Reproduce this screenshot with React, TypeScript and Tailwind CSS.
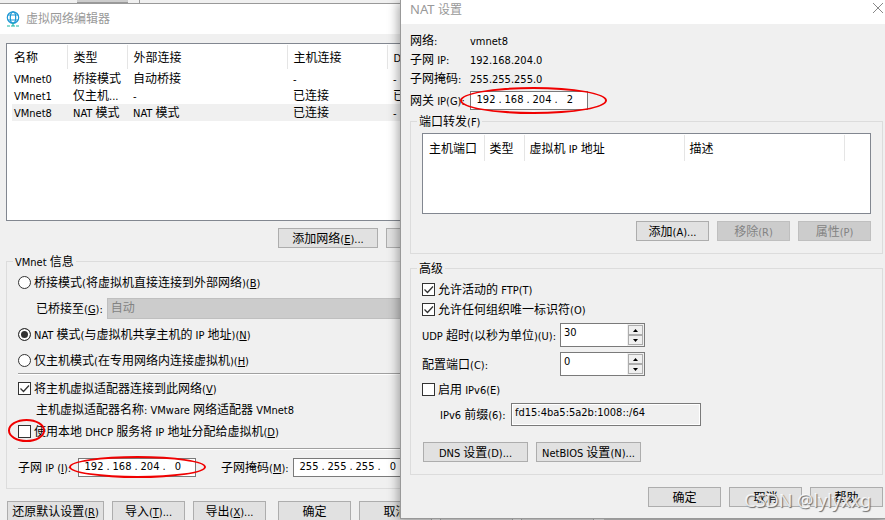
import { ReactNode } from "react";

type TextProps = {
  children: string;
};

type ButtonProps = {
  label: string;
  className?: string;
  disabled?: boolean;
};

type FieldProps = {
  label: string;
  checked?: boolean;
};

// Renders a caption: "&X" marks the mnemonic letter, latin runs are set a bit smaller than chinese ones
function Caption({ children }: TextProps) {
  const parts = children.split(/([\u4e00-\u9fff]+)/).filter(Boolean);
  return (
    <span className="inline-block pt-[2px] whitespace-pre">
      {parts.map((part, i) => {
        if (/[\u4e00-\u9fff]/.test(part)) return <span key={i}>{part}</span>;
        const [before, after] = part.split("&");
        return (
          <span key={i} className="text-[11px]">
            {before}
            {after && <u>{after[0]}</u>}
            {after && after.slice(1)}
          </span>
        );
      })}
    </span>
  );
}

function Button({ label, className = "w-[73px]", disabled }: ButtonProps) {
  return (
    <button
      disabled={disabled}
      className={`h-5 shrink-0 border border-[#adadad] bg-[#e1e1e1] leading-4 disabled:border-[#bfbfbf] disabled:bg-[#ccc] disabled:text-[#838383] ${className}`}
    >
      <Caption>{label}</Caption>
    </button>
  );
}

function Checkbox({ label, checked }: FieldProps) {
  return (
    <label className="flex items-center gap-[3px]">
      <span className="relative flex">
        <input type="checkbox" defaultChecked={checked} className="peer size-[13px] appearance-none border border-[#333] bg-white" />
        <svg viewBox="0 0 13 13" className="pointer-events-none absolute inset-0 hidden size-[13px] peer-checked:block">
          <path d="M2.5 6.5l3 3 5.5-6" fill="none" stroke="#333" strokeWidth="1.3" />
        </svg>
      </span>
      <Caption>{label}</Caption>
    </label>
  );
}

function Radio({ label, checked }: FieldProps) {
  return (
    <label className="flex h-[26px] items-center gap-[3px]">
      <input
        type="radio"
        name="vmnet-mode"
        defaultChecked={checked}
        className="size-[13px] appearance-none rounded-full border border-[#333] bg-white checked:bg-[#333] checked:shadow-[inset_0_0_0_2px_#fff]"
      />
      <Caption>{label}</Caption>
    </label>
  );
}

function IpInput({ label, value }: { label: string; value: string[] }) {
  return (
    <div role="group" aria-label={label} className="flex h-[19px] w-[118px] shrink-0 items-center border border-[#7a7a7a] bg-white pl-[3px] text-[11px]">
      {value.map((octet, i) => (
        <div key={i} className="flex items-center">
          {i > 0 && <span className="w-1 text-center">.</span>}
          <input aria-label={`${label} ${i + 1}`} defaultValue={octet} className="w-6 text-center outline-none" />
        </div>
      ))}
    </div>
  );
}

function Spinner({ id, value }: { id: string; value: string }) {
  return (
    <div className="flex h-6 w-[85px] border border-[#7a7a7a] bg-white">
      <input id={id} defaultValue={value} className="w-0 flex-1 pb-1 pl-[3px] text-[11px] outline-none" />
      <div className="flex w-[17px] flex-col bg-[#f0f0f0] p-px">
        <button aria-label="+" className="flex flex-1 items-center justify-center border border-[#adadad] bg-[#f0f0f0]">
          <svg viewBox="0 0 5 3" className="h-[3px] w-[5px]"><path d="M0 3L2.5 0 5 3z" /></svg>
        </button>
        <button aria-label="-" className="flex flex-1 items-center justify-center border border-[#adadad] bg-[#f0f0f0]">
          <svg viewBox="0 0 5 3" className="h-[3px] w-[5px]"><path d="M0 0L2.5 3 5 0z" /></svg>
        </button>
      </div>
    </div>
  );
}

function Group({ title, className, children }: { title: string; className: string; children: ReactNode }) {
  return (
    <fieldset className={`border border-[#dcdcdc] ${className}`}>
      <legend className="-ml-[5px] h-4 px-[2px] leading-[14px]"><Caption>{title}</Caption></legend>
      {children}
    </fieldset>
  );
}

function Divider() {
  return <hr className="h-[2px] border-t border-b border-t-[#a0a0a0] border-b-white" />;
}

function Mark({ className }: { className: string }) {
  return <span className={`pointer-events-none absolute rounded-[50%] border-2 border-[#f00000] ${className}`} />;
}

const networks = [
  { name: "VMnet0", type: "桥接模式", external: "自动桥接", host: "-", dhcp: "-" },
  { name: "VMnet1", type: "仅主机...", external: "-", host: "已连接", dhcp: "已启用" },
  { name: "VMnet8", type: "NAT 模式", external: "NAT 模式", host: "已连接", dhcp: "-", selected: true },
];

function NetworkTable() {
  return (
    <div className="mx-[6px] mt-[9px] h-[178px] border border-[#828790] bg-white pt-px pl-[5px]">
      <table className="w-full table-fixed text-left">
        <thead>
          <tr className="h-6 leading-4">
            <th className="w-[55px] border-r border-[#e5e5e5] pl-[2px] font-normal"><Caption>名称</Caption></th>
            <th className="w-[60px] border-r border-[#e5e5e5] pl-[6px] font-normal"><Caption>类型</Caption></th>
            <th className="w-[160px] border-r border-[#e5e5e5] pl-[6px] font-normal"><Caption>外部连接</Caption></th>
            <th className="w-[100px] border-r border-[#e5e5e5] pl-[6px] font-normal"><Caption>主机连接</Caption></th>
            <th className="pl-[6px] font-normal"><Caption>DHCP</Caption></th>
          </tr>
        </thead>
        <tbody>
          <tr className="h-px" />
          {networks.map((net) => (
            <tr key={net.name} className={`h-[17px] leading-[15px] ${net.selected ? "bg-[#f0f0f0]" : ""}`}>
              <td className="pl-[2px]"><Caption>{net.name}</Caption></td>
              <td className="pl-[6px]"><Caption>{net.type}</Caption></td>
              <td className="pl-[6px]"><Caption>{net.external}</Caption></td>
              <td className="pl-[6px]"><Caption>{net.host}</Caption></td>
              <td className="pl-[6px]"><Caption>{net.dhcp}</Caption></td>
            </tr>
          ))}
        </tbody>
      </table>
    </div>
  );
}

function EditorWindow() {
  return (
    <main className="flex w-[604px] shrink-0 flex-col border-t border-[#999] bg-[#f0f0f0]">
      <header className="flex h-[30px] items-center gap-[6px] bg-white pl-[6px] text-[#999]">
        <svg viewBox="0 0 14 16" className="h-4 w-[14px]" fill="none" stroke="#1c97d4" strokeWidth="1.2">
          <circle cx="7" cy="6.5" r="5.7" />
          <ellipse cx="7" cy="6.5" rx="2.7" ry="5.7" />
          <path d="M1.8 4h10.4M1.8 9h10.4" />
          <path d="M1 15h3M5 15h4M10 15h3M7 12v3" stroke="#18b5a4" />
        </svg>
        <h1>虚拟网络编辑器</h1>
      </header>

      <NetworkTable />

      <div className="mt-[7px] flex gap-2 pl-[278px]">
        <Button label="添加网络(&E)..." className="w-[100px]" />
        <Button label="移除网络(&O)" className="w-[100px]" />
        <Button label="重命名网络(&W)..." className="w-[100px]" />
      </div>

      <Group title="VMnet 信息" className="mx-[6px] mt-[5px] pb-2 pl-[11px]">
        <Radio label="桥接模式(将虚拟机直接连接到外部网络)(&B)" />
        <div className="flex h-[26px] items-center gap-1 pl-[18px]">
          <label htmlFor="bridge"><Caption>已桥接至(&G):</Caption></label>
          <select id="bridge" disabled className="h-[21px] w-[340px] appearance-none border border-[#bfbfbf] bg-[#ccc] pl-[3px] text-[#838383]">
            <option>自动</option>
          </select>
        </div>
        <Radio label="NAT 模式(与虚拟机共享主机的 IP 地址)(&N)" checked />
        <Radio label="仅主机模式(在专用网络内连接虚拟机)(&H)" />
        <Divider />
        <div className="flex h-[26px] items-center">
          <Checkbox label="将主机虚拟适配器连接到此网络(&V)" checked />
        </div>
        <p className="h-[17px] pl-[18px] leading-[14px]"><Caption>主机虚拟适配器名称: VMware 网络适配器 VMnet8</Caption></p>
        <div className="relative mb-1 flex h-[26px] items-center">
          <Checkbox label="使用本地 DHCP 服务将 IP 地址分配给虚拟机(&D)" />
          <Mark className="-left-[10px] top-[1px] h-[23px] w-[37px]" />
        </div>
        <Divider />
        <div className="mt-1 flex h-[26px] items-center">
          <div className="relative flex items-center">
            <span className="w-[60px]"><Caption>子网 IP (&I):</Caption></span>
            <IpInput label="子网 IP" value={["192", "168", "204", "0"]} />
            <Mark className="-top-[1px] left-[51px] h-[22px] w-[137px]" />
          </div>
          <span className="ml-[25px] w-[72px]"><Caption>子网掩码(&M):</Caption></span>
          <IpInput label="子网掩码" value={["255", "255", "255", "0"]} />
        </div>
      </Group>

      <footer className="mt-3 flex gap-2 pl-[7px]">
        <Button label="还原默认设置(&R)" className="w-[97px]" />
        <Button label="导入(&T)..." />
        <Button label="导出(&X)..." className="mr-1 w-[73px]" />
        <Button label="确定" />
        <Button label="取消" />
        <Button label="应用(&A)" />
        <Button label="帮助" />
      </footer>
    </main>
  );
}

function NatDialog() {
  return (
    <section className="absolute top-0 right-0 left-[400px] border-b border-l border-[#999] bg-[#f0f0f0] shadow-[-2px_2px_10px_rgba(0,0,0,0.35)]">
      <header className="flex h-6 items-start justify-between bg-white pl-[9px] text-[#999]">
        <h2 className="leading-[18px]"><span className="font-['Noto_Sans',sans-serif] text-[13px]">NAT</span> 设置</h2>
        <button aria-label="关闭" className="mt-[3px] mr-[2px]">
          <svg viewBox="0 0 10 10" className="size-[10px]" stroke="#888" strokeWidth="1"><path d="M0 0l10 10M10 0L0 10" /></svg>
        </button>
      </header>

      <div className="pt-[7px] pr-[2px] pb-[11px] pl-[9px]">
        <dl className="grid grid-cols-[60px_1fr] leading-[17px]">
          <dt><Caption>网络:</Caption></dt>
          <dd><Caption>vmnet8</Caption></dd>
          <dt><Caption>子网 IP:</Caption></dt>
          <dd><Caption>192.168.204.0</Caption></dd>
          <dt><Caption>子网掩码:</Caption></dt>
          <dd><Caption>255.255.255.0</Caption></dd>
        </dl>
        <div className="relative flex h-6 items-center">
          <span className="w-[60px] shrink-0"><Caption>网关 IP(G):</Caption></span>
          <IpInput label="网关 IP" value={["192", "168", "204", "2"]} />
          <Mark className="-top-[1px] left-[50px] h-[27px] w-[147px]" />
        </div>

        <Group title="端口转发(F)" className="mt-px pr-[11px] pb-3 pl-[11px]">
          <div className="mt-1 h-[81px] border border-[#828790] bg-white pt-px">
            <table className="w-full table-fixed text-left">
              <thead>
                <tr className="h-[26px] leading-4">
                  <th className="w-[61px] border-r border-[#e5e5e5] pl-[6px] font-normal"><Caption>主机端口</Caption></th>
                  <th className="w-[40px] border-r border-[#e5e5e5] pl-[5px] font-normal"><Caption>类型</Caption></th>
                  <th className="w-[160px] border-r border-[#e5e5e5] pl-[5px] font-normal"><Caption>虚拟机 IP 地址</Caption></th>
                  <th className="w-[160px] border-r border-[#e5e5e5] pl-[5px] font-normal"><Caption>描述</Caption></th>
                  <th />
                </tr>
              </thead>
            </table>
          </div>
          <div className="mt-[7px] flex justify-end gap-2">
            <Button label="添加(A)..." />
            <Button label="移除(R)" disabled />
            <Button label="属性(P)" disabled />
          </div>
        </Group>

        <Group title="高级" className="mt-[6px] pb-3 pl-[11px]">
          <div className="mt-[3px] flex h-5 items-center"><Checkbox label="允许活动的 FTP(T)" checked /></div>
          <div className="flex h-5 items-center"><Checkbox label="允许任何组织唯一标识符(O)" checked /></div>
          <div className="mt-1 grid grid-cols-[138px_1fr] items-center gap-y-[5px]">
            <label htmlFor="udp"><Caption>UDP 超时(以秒为单位)(U):</Caption></label>
            <Spinner id="udp" value="30" />
            <label htmlFor="port"><Caption>配置端口(C):</Caption></label>
            <Spinner id="port" value="0" />
          </div>
          <div className="mt-[3px] flex h-5 items-center"><Checkbox label="启用 IPv6(E)" /></div>
          <div className="mt-1 flex items-center pl-[18px]">
            <label htmlFor="prefix" className="w-[71px]"><Caption>IPv6 前缀(6):</Caption></label>
            <input id="prefix" readOnly defaultValue="fd15:4ba5:5a2b:1008::/64" className="h-[23px] w-[190px] border border-[#7a7a7a] bg-[#f0f0f0] pb-1 pl-[3px] text-[11px] shadow-[inset_0_0_0_1px_#fff]" />
          </div>
          <div className="mt-4 flex gap-2 pl-px">
            <Button label="DNS 设置(D)..." className="w-[105px]" />
            <Button label="NetBIOS 设置(N)..." className="w-[105px]" />
          </div>
        </Group>

        <footer className="mt-3 flex justify-end gap-2">
          <Button label="确定" />
          <Button label="取消" />
          <Button label="帮助" />
        </footer>
      </div>
    </section>
  );
}

export default function App() {
  return (
    <div className="relative flex h-screen flex-col overflow-hidden bg-[#c8c8c8] font-['DejaVu_Sans_Condensed','Noto_Sans_CJK_SC',sans-serif] text-[12px] text-black">
      <div className="flex h-[3px] shrink-0 bg-[#f0f0f0] pl-[77px]">
        <div className="w-[51px] border-b border-[#999] bg-[#ccc]" />
        <div className="w-3 border-r border-[#999]" />
      </div>
      <EditorWindow />
      <NatDialog />
      <p className="pointer-events-none absolute right-[14px] bottom-[8px] font-['Noto_Sans',sans-serif] text-[18px] leading-6 text-white/80 [text-shadow:1px_1px_1px_#666]">CSDN @lylyxxg</p>
    </div>
  );
}
